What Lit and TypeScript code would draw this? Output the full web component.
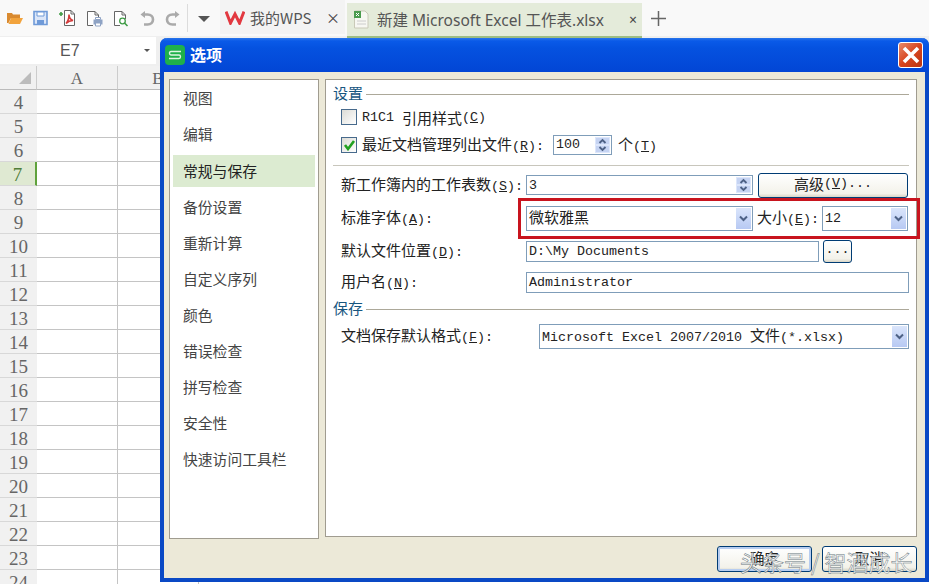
import { LitElement, html, css, svg } from "lit";
import { customElement } from "lit/decorators.js";

const L = (cjk: string, key: string, tail = ":") => html`<span class="cjk">${cjk}</span><span class="lat">(<u>${key}</u>)${tail}</span>`;

const spin = html`<span class="spin"><i>${svg`<svg width="9" height="6" viewBox="0 0 9 6"><path d="M1.500 5 4.500 2 7.500 5" fill="none" stroke="#4d6185" stroke-width="1.800"/></svg>`}</i><i>${svg`<svg width="9" height="6" viewBox="0 0 9 6"><path d="M1.500 1 4.500 4 7.500 1" fill="none" stroke="#4d6185" stroke-width="1.800"/></svg>`}</i></span>`;
const drop = html`<span class="drop">${svg`<svg width="9" height="7" viewBox="0 0 9 7"><path d="M1 1.500 4.500 5 8 1.500" fill="none" stroke="#4d6185" stroke-width="2"/></svg>`}</span>`;

const navItems = ["视图", "编辑", "常规与保存", "备份设置", "重新计算", "自定义序列", "颜色", "错误检查", "拼写检查", "安全性", "快速访问工具栏"];

@customElement("app-root")
export class AppRoot extends LitElement {
  static styles = css`
    :host { display: block; position: relative; width: 929px; height: 584px; overflow: hidden; background: #fff; font-family: "Noto Sans CJK SC", sans-serif; color: #333; }
    .toolbar { height: 36px; background: #f9f9f9; display: flex; align-items: center; box-sizing: border-box; padding-left: 6px; position: relative; z-index: 1; }
    .tools { display: flex; align-items: center; gap: 10px; flex: none; }
    .tools svg { display: block; flex: none; }
    .vsep { width: 1px; height: 28px; background: #dcdcdc; margin-left: -4px; }
    .caret { width: 0; height: 0; border: 6px solid transparent; border-top: 6px solid #555; border-bottom: 0; margin: 1px 10px 0 10px; flex: none; }
    .tab { display: flex; align-items: center; font-size: 15px; box-sizing: border-box; color: #555; flex: none; }
    .tab.home { width: 125px; height: 34px; align-self: flex-start; background: #f3f3f3; padding-left: 5px; gap: 5px; margin-right: 2px; }
    .tab.doc { width: 295px; height: 35px; align-self: flex-start; margin-top: 3px; background: #e4ebda; border-bottom: 2px solid #9dbd83; padding-left: 6px; gap: 8px; font-size: 15.500px; font-family: "Noto Sans", "Noto Sans CJK SC", sans-serif; }
    .tab .x { margin-left: auto; margin-right: 5px; font-size: 14px; color: #444; }
    .plus { margin-left: 9px; flex: none; }
    .formula { height: 30px; background: #efefef; box-sizing: border-box; padding-top: 1px; }
    .name { width: 156px; height: 27px; background: #fff; display: flex; align-items: center; justify-content: space-between; font-family: "Liberation Sans", sans-serif; font-size: 16px; color: #555; padding: 0 6px 0 60px; box-sizing: border-box; }
    .name b { width: 0; height: 0; border: 3px solid transparent; border-top: 3px solid #555; border-bottom: 0; }
    .sheet { display: grid; grid-template-columns: 37px 81px 81px 1fr; grid-auto-rows: 24px; background: #fff; }
    .corner, .colh, .rowh { background: #f1f1f1; box-sizing: border-box; font-family: "Liberation Serif", serif; color: #666; display: flex; align-items: center; justify-content: center; }
    .corner { border-right: 1px solid #ccc; border-bottom: 1px solid #bbb; justify-content: flex-end; align-items: flex-end; padding: 0 5px 5px 0; }
    .corner i { width: 0; height: 0; border-left: 12px solid transparent; border-bottom: 12px solid #bcbcbc; }
    .colh { border-right: 1px solid #ccc; border-bottom: 1px solid #bbb; font-size: 17px; padding-top: 2px; }
    .rowh { border-bottom: 1px solid #d8d8d8; font-size: 19px; padding-top: 3px; }
    .rowh.sel { background: #dfe9d2; border-right: 2px solid #5fa23c; color: #4f7d38; }
    .cell { border-right: 1px solid #c4c4c4; border-bottom: 1px solid #c4c4c4; box-sizing: border-box; }
    .cell.last { border-right: 0; }
    .dialog { position: absolute; left: 160px; top: 38px; width: 769px; height: 544px; box-sizing: border-box; background: #ece9d8; border-radius: 7px 7px 0 0; border: solid #0a49c5; border-width: 0 4px 4px 4px; display: flex; flex-direction: column; z-index: 0; }
    .title { height: 34px; margin: 0 -4px; background: linear-gradient(#2a75ea 0, #0a5ae8 3px, #0552e0 10px, #0246d5 100%); border-radius: 7px 7px 0 0; display: flex; align-items: center; padding: 0 6px 0 5px; gap: 5px; color: #fff; font-size: 16px; font-weight: 700; flex: none; }
    .title .text { padding-bottom: 2px; }
    .logo { width: 20px; height: 20px; border-radius: 4px; background: #1fb04a; display: flex; align-items: center; justify-content: center; }
    .close { margin-left: auto; width: 25px; height: 26px; border: 1px solid #fff; border-radius: 3px; box-sizing: border-box; background: linear-gradient(135deg, #e88a6a, #d8451f 50%, #b93410); display: flex; align-items: center; justify-content: center; }
    .panes { display: flex; align-items: flex-start; gap: 6px; padding: 7px 5px 0 5px; flex: none; }
    .nav { width: 150px; height: 460px; background: #fff; border: 1px solid #a09c90; box-sizing: border-box; padding: 0 3px; font-size: 14.800px; color: #444; flex: none; }
    .nav div { height: 36px; box-sizing: border-box; display: flex; align-items: center; padding: 0 0 2px 10px; }
    .nav div.active { background: #dcebd1; color: #222; height: 32px; margin: 3px 0 2px; }
    .main { width: 592px; height: 458px; background: #fff; border: 1px solid #a09c90; box-sizing: border-box; padding: 4px 7px 0 7px; font-size: 15px; color: #222; flex: none; }
    .cjk { font-family: "Noto Sans CJK SC", sans-serif; font-size: 15px; }
    .lat { font-family: "Liberation Mono", monospace; font-size: 13.330px; }
    .group { display: flex; align-items: center; gap: 3px; height: 20px; color: #17567f; font-size: 15px; }
    .group span { padding-bottom: 3px; }
    .group::after { content: ""; flex: 1; height: 1px; background: #aca899; }
    .group.second { margin-top: 5px; }
    .hr { height: 1px; background: #c8c6bc; margin-top: 6px; }
    .row { display: flex; align-items: center; padding-left: 8px; white-space: pre; }
    .h26 { height: 26px; } .h29 { height: 29px; } .h38 { height: 38px; } .h28 { height: 28px; } .h24 { height: 24px; } .h34 { height: 34px; }
    .lab { width: 185px; flex: none; padding-bottom: 3px; }
    .lab.wide { width: 198px; }
    .lift { padding-bottom: 2px; }
    .check { width: 16px; height: 16px; border: 1px solid #476a8c; box-sizing: border-box; background: linear-gradient(135deg, #dcdcd6, #fff); margin-right: 5px; display: flex; align-items: center; justify-content: center; flex: none; }
    .input { box-sizing: border-box; border: 1px solid #7f9db9; background: #fff; display: flex; align-items: center; font-family: "Liberation Mono", "Noto Sans CJK SC", monospace; font-size: 13.330px; padding-left: 2px; color: #222; flex: none; }
    .input .up { padding-bottom: 3px; }
    .spin { margin-left: auto; width: 15px; height: calc(100% - 2px); margin-right: 1px; display: flex; flex-direction: column; background: #c5d3f2; }
    .spin i { flex: 1; display: flex; align-items: center; justify-content: center; border: 1px solid #dce6fb; box-sizing: border-box; }
    .drop { margin-left: auto; width: 15px; height: calc(100% - 2px); margin-right: 1px; display: flex; align-items: center; justify-content: center; background: linear-gradient(#dae5fb, #b7c9f3); }
    .btn { box-sizing: border-box; border: 1px solid #003c74; border-radius: 3px; background: linear-gradient(#fff, #f3f2ea 85%, #d8d5c6); display: flex; align-items: center; justify-content: center; flex: none; font-size: 15px; color: #222; padding-bottom: 3px; }
    .count { width: 59px; height: 20px; margin-left: 9px; }
    .unit { margin-left: 6px; }
    .sheets { width: 227px; height: 20px; }
    .adv { width: 150px; height: 25px; margin-left: 5px; }
    .font { width: 227px; height: 25px; }
    .sizelab { margin-left: 4px; padding-bottom: 3px; }
    .size { width: 86px; height: 25px; margin-left: 3px; }
    .path { width: 293px; height: 21px; }
    .more { width: 29px; height: 23px; margin-left: 4px; }
    .user { width: 383px; height: 21px; }
    .format { width: 370px; height: 25px; }
    .highlight { position: absolute; left: 518px; top: 198px; width: 402px; height: 41px; border: 3px solid #c8141e; box-sizing: border-box; pointer-events: none; }
    .footer { display: flex; justify-content: flex-end; gap: 10px; padding: 7px 8px 0 0; }
    .footer .btn { width: 95px; height: 26px; font-size: 14.500px; }
    .footer .ok { box-shadow: inset 0 0 0 2px #b7cdf0; }
    .mark { position: absolute; left: 740px; top: 545px; font-size: 22px; line-height: 32px; color: rgba(255,255,255,0.8); -webkit-text-stroke: 0.5px #66757c; white-space: pre; pointer-events: none; }
  `;

  icon(kind: string) {
    switch (kind) {
      case "folder": return html`<svg width="17" height="16" viewBox="0 0 17 16"><path d="M1 13V3h5l1 1.500h7V8H5L2.500 13z" fill="#d98a30"/><path d="M2.500 14 5 8h12l-3 6z" fill="#f2a33c"/></svg>`;
      case "save": return html`<svg width="15" height="16" viewBox="0 0 15 16"><path d="M1 1.500h13v13H1z" fill="#dbe6f8" stroke="#6f9ad8" stroke-width="1.600"/><path d="M4 2h7v4H4z" fill="#fff" stroke="#6f9ad8"/><path d="M4 10h7v4H4z" fill="#6f9ad8"/></svg>`;
      case "pdf": return html`<svg width="18" height="18" viewBox="0 0 18 18"><path d="M6.500 1.500H13l3.500 3.500v11.500h-10z" fill="#fff" stroke="#666"/><path d="M13 1.500V5h3.500" fill="none" stroke="#666"/><path d="M1 5h4M3 3v4" stroke="#3f9c46" stroke-width="1.600"/><path d="M8 14.500c2-2 3-6 3-9 0 3 1.500 5 4 6-3 0-5 1-7 3z" fill="none" stroke="#d43b3b" stroke-width="1.600"/></svg>`;
      case "print": return html`<svg width="17" height="17" viewBox="0 0 17 17"><path d="M7 15.500H1.500v-14H9l3.500 3.500V8" fill="#fff" stroke="#666"/><path d="M9 1.500V5h3.500" fill="none" stroke="#666"/><path d="M7.500 9.500h9v5h-9z" fill="#8fa3c4"/><path d="M9.500 7.500h5v2h-5zM9.500 13h5v3h-5z" fill="#fff" stroke="#8fa3c4"/></svg>`;
      case "preview": return html`<svg width="16" height="17" viewBox="0 0 16 17"><path d="M7 15.500H1.500v-14H9l3.500 3.500v4" fill="#fff" stroke="#666"/><path d="M9 1.500V5h3.500" fill="none" stroke="#666"/><circle cx="9.500" cy="11" r="2.800" fill="#fff" stroke="#3f9c46" stroke-width="1.300"/><path d="M11.500 13l3 3" stroke="#3f9c46" stroke-width="1.600"/></svg>`;
      case "undo": return html`<svg width="16" height="15" viewBox="0 0 16 15"><path d="M5 13.500h3.500c3.500 0 5.500-2 5.500-5s-2-5-5.500-5H4" fill="none" stroke="#aaa" stroke-width="2.600"/><path d="M1.500 3.500 6 0v7z" fill="#aaa"/></svg>`;
      default: return html`<svg width="16" height="15" viewBox="0 0 16 15"><path d="M11 13.500H7.500c-3.500 0-5.500-2-5.500-5s2-5 5.500-5H12" fill="none" stroke="#aaa" stroke-width="2.600"/><path d="M14.500 3.500 10 0v7z" fill="#aaa"/></svg>`;
    }
  }

  render() {
    const rows = Array.from({ length: 21 }, (_, i) => i + 4);
    return html`
      <div class="toolbar">
        <div class="tools">${["folder", "save", "pdf", "print", "preview", "undo", "redo"].map((k) => this.icon(k))}<span class="vsep"></span></div>
        <span class="caret"></span>
        <div class="tab home">
          <svg width="20" height="15" viewBox="0 0 20 15"><path d="M1 1.500 5.500 13 10 4l4.500 9L19 1.500" fill="none" stroke="#e2383f" stroke-width="3"/></svg>
          <span>我的WPS</span><span class="x">×</span>
        </div>
        <div class="tab doc">
          <svg width="16" height="19" viewBox="0 0 16 19"><path d="M1.500 1H12l3 3v14H1.500z" fill="#f7f7f2" stroke="#c9c9b8"/><path d="M1 1h7v7H1z" fill="#4b9b4e"/><path d="M3 3l3 3M6 3 3 6" stroke="#fff"/><path d="M4 11h9M4 14h9" stroke="#ccc"/></svg>
          <span>新建 Microsoft Excel 工作表.xlsx</span><span class="x">×</span>
        </div>
        <svg class="plus" width="15" height="15" viewBox="0 0 15 15"><path d="M7.500 0v15M0 7.500h15" stroke="#666" stroke-width="1.500"/></svg>
      </div>
      <div class="formula"><div class="name"><span>E7</span><b></b></div></div>
      <div class="sheet">
        <div class="corner"><i></i></div><div class="colh">A</div><div class="colh">B</div><div class="colh"></div>
        ${rows.map((r) => html`<div class="rowh ${r === 7 ? "sel" : ""}">${r}</div><div class="cell"></div><div class="cell"></div><div class="cell last"></div>`)}
      </div>
      <div class="dialog">
        <div class="title">
          <span class="logo"><svg width="14" height="10" viewBox="0 0 14 10"><path d="M13 1.500H3C1 1.500 1 5 3 5h8c2 0 2 3.500 0 3.500H1" fill="none" stroke="#dff5e4" stroke-width="1.400"/></svg></span>
          <span class="text">选项</span>
          <span class="close"><svg width="18" height="18" viewBox="0 0 18 18"><path d="M2 2 16 16M16 2 2 16" stroke="#fff" stroke-width="3.600"/></svg></span>
        </div>
        <div class="panes">
          <div class="nav">${navItems.map((n, i) => html`<div class="${i === 2 ? "active" : ""}">${n}</div>`)}</div>
          <div class="main">
            <div class="group"><span>设置</span></div>
            <div class="row h26"><span class="check"></span><span class="lat">R1C1 </span><span class="cjk">引用样式</span><span class="lat">(<u>C</u>)</span></div>
            <div class="row h29"><span class="check"><svg width="13" height="12" viewBox="0 0 13 12"><path d="M2 6 5 10 11 2" fill="none" stroke="#21a121" stroke-width="2.600"/></svg></span><span class="lift">${L("最近文档管理列出文件", "R")}</span><span class="input count"><span>100</span>${spin}</span><span class="lift unit"><span class="cjk">个</span><span class="lat">(<u>T</u>)</span></span></div>
            <div class="hr"></div>
            <div class="row h38"><span class="lab">${L("新工作簿内的工作表数", "S")}</span><span class="input sheets"><span>3</span>${spin}</span><span class="btn adv"><span class="cjk">高级</span><span class="lat">(<u>V</u>)...</span></span></div>
            <div class="row h28"><span class="lab">${L("标准字体", "A")}</span><span class="input font"><span class="cjk up">微软雅黑</span>${drop}</span><span class="sizelab">${L("大小", "E")}</span><span class="input size"><span>12</span>${drop}</span></div>
            <div class="row h38"><span class="lab">${L("默认文件位置", "D")}</span><span class="input path">D:\\My Documents</span><span class="btn more"><span class="lat">...</span></span></div>
            <div class="row h24"><span class="lab">${L("用户名", "N")}</span><span class="input user">Administrator</span></div>
            <div class="group second"><span>保存</span></div>
            <div class="row h34"><span class="lab wide">${L("文档保存默认格式", "F")}</span><span class="input format"><span class="up">Microsoft Excel 2007/2010 <span class="cjk">文件</span>(*.xlsx)</span>${drop}</span></div>
          </div>
        </div>
        <div class="footer"><span class="btn ok">确定</span><span class="btn">取消</span></div>
      </div>
      <div class="highlight"></div>
      <div class="mark">头条号 / 智酒成长</div>
    `;
  }
}
